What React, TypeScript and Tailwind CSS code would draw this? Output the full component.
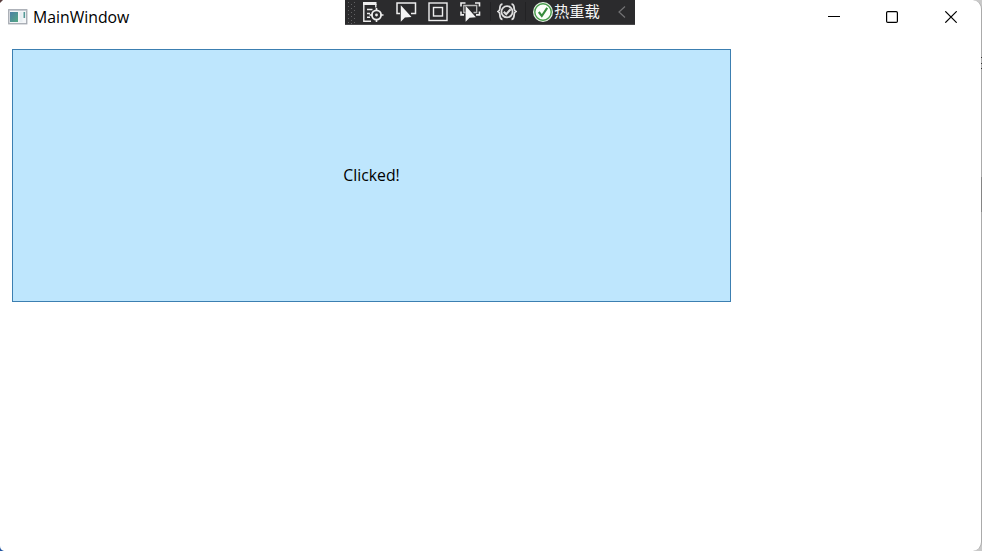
import React from "react";

function AppIcon() {
  return (
    <svg width="20" height="16" viewBox="0 0 20 16" className="shrink-0">
      <defs>
        <linearGradient id="pane" x1="0" y1="0" x2="1" y2="1">
          <stop offset="0" stopColor="#4b7fa6" />
          <stop offset="1" stopColor="#55a884" />
        </linearGradient>
      </defs>
      <rect x="0.75" y="0.75" width="18" height="14" fill="#f4f6f8" stroke="#a4a8b0" strokeWidth="1.3" />
      <path d="M1 1.4h17.5" stroke="#c3c7d0" />
      <rect x="2" y="3" width="8" height="10" fill="url(#pane)" />
      <rect x="11.5" y="3" width="3" height="10" fill="#e8eef2" />
      <path d="M16.3 3v6" stroke="#559a98" strokeWidth="1.6" />
    </svg>
  );
}

function LiveTreeIcon() {
  return (
    <svg width="21" height="22" viewBox="0 0 21 22" fill="none" stroke="#eeeeee" className="shrink-0">
      <path d="M0 1.5h13.5" strokeWidth="3" />
      <path d="M.8 1v18.2H8M12.8 2v3.5M4 7.5h5.5M4 11.5h3M4 15.2h3" strokeWidth="1.4" />
      <circle cx="13.5" cy="13" r="4.6" strokeWidth="1.8" />
      <circle cx="13.5" cy="13" r="1.4" fill="#eeeeee" stroke="none" />
      <path d="M13.5 6v3M13.5 17v3M6.5 13h3M17.5 13h3" strokeWidth="1.6" />
    </svg>
  );
}

function SelectIcon() {
  return (
    <svg width="21" height="22" viewBox="0 0 21 22" fill="none" className="shrink-0">
      <path d="M4 11.5H1V1h18.5v10.5H15" stroke="#eeeeee" strokeWidth="1.5" />
      <path d="M4.8 3.2v16.5l4.1-4.1 6.6-.5z" fill="#f5f5f5" />
    </svg>
  );
}

function AdornerIcon() {
  return (
    <svg width="20" height="20" viewBox="0 0 20 20" fill="none" stroke="#eeeeee" strokeWidth="1.4" className="shrink-0">
      <rect x="1" y="1" width="18" height="17.5" />
      <rect x="5.5" y="5.5" width="9" height="8.5" />
    </svg>
  );
}

function FocusIcon() {
  return (
    <svg width="21" height="22" viewBox="0 0 21 22" fill="none" className="shrink-0">
      <path d="M1 4.5V1h4.5M15 1h4.5v3.5M1 9.5v3.4h3M19.5 9.5v3.4H16" stroke="#eeeeee" strokeWidth="1.6" />
      <path d="M5.5 10.5H3.8V3.5h12.9v7H13.5" stroke="#b9b9b9" strokeWidth="1.3" />
      <path d="M5.6 3.8v16l4-4.1 6.3-.4z" fill="#f5f5f5" />
    </svg>
  );
}

function BindingIcon() {
  return (
    <svg width="20" height="18" viewBox="0 0 20 18" fill="none" stroke="#dedede" className="shrink-0">
      <path d="M5.5 1.2C2.8 1.2 3 3.3 2.8 6 2.7 7.8 1 8.5 1 8.5s1.7.7 1.8 2.5c.2 2.7 0 5.3 2.7 5.3M14.5 1.2c2.7 0 2.5 2.1 2.7 4.8.1 1.8 1.8 2.5 1.8 2.5s-1.7.7-1.8 2.5c-.2 2.7 0 5.3-2.7 5.3" strokeWidth="1.8" />
      <circle cx="10" cy="8.8" r="5.6" strokeWidth="1.8" />
      <path d="M6.8 8.8l2.4 2.5 4.4-5" strokeWidth="2.1" />
    </svg>
  );
}

function ReloadIcon() {
  return (
    <svg width="20" height="20" viewBox="0 0 20 20" fill="none" className="shrink-0">
      <circle cx="10" cy="10" r="10" fill="#e7f3e5" />
      <circle cx="10" cy="10" r="8.2" fill="#fbfffa" stroke="#479b4b" strokeWidth="1.4" />
      <path d="M5.8 10l3 4L14.2 5.8" stroke="#368b3b" strokeWidth="2.1" />
    </svg>
  );
}

function DebugToolbar() {
  return (
    <div className="absolute left-[345px] top-0 flex h-[25px] w-[290px] items-start border-b border-[#49494b] bg-[#2b2b2d] pt-[2px]">
      <svg width="9" height="22" viewBox="0 0 9 22" className="ml-[2px] shrink-0" fill="#626264">
        {[0, 4, 8, 12, 16, 20].map((y) => (
          <g key={y}>
            <rect x="1" y={y} width="1" height="1" />
            <rect x="7" y={y} width="1" height="1" />
            <rect x="4" y={y + 2 > 21 ? 21 : y + 2} width="1" height="1" />
          </g>
        ))}
      </svg>
      <div className="ml-[7px] flex"><LiveTreeIcon /></div>
      <div className="ml-[12px] flex"><SelectIcon /></div>
      <div className="ml-[11px] flex"><AdornerIcon /></div>
      <div className="ml-[12px] flex"><FocusIcon /></div>
      <div className="ml-[9px] h-[19px] w-px bg-[#222224]" />
      <div className="ml-[6px] mt-[1px] flex"><BindingIcon /></div>
      <div className="ml-[8px] h-[19px] w-px bg-[#222224]" />
      <div className="ml-[7px] flex"><ReloadIcon /></div>
      <span className="ml-[1px] mt-[-2px] whitespace-nowrap font-['Noto_Sans_CJK_SC',sans-serif] text-[15.3px] leading-[20px] text-[#f5f5f5]">热重载</span>
      <svg width="8" height="12" viewBox="0 0 8 12" fill="none" stroke="#737375" strokeWidth="1.2" className="ml-[18px] mt-[4px] shrink-0">
        <path d="M7 .5L1 6l6 5.5" />
      </svg>
    </div>
  );
}

function TitleBar() {
  return (
    <header className="flex h-[34px] items-center pl-[8px]">
      <AppIcon />
      <h1 className="ml-[5px] flex-1 whitespace-nowrap font-['Open_Sans','Noto_Sans',sans-serif] text-[15.8px] leading-[20px] text-black">MainWindow</h1>
      <div className="flex items-center gap-[46px] pr-[24px] text-black">
        <svg width="12" height="12" viewBox="0 0 12 12"><path d="M0 5.5h12" stroke="currentColor" /></svg>
        <svg width="12" height="12" viewBox="0 0 12 12" fill="none"><rect x=".6" y=".6" width="10.8" height="10.8" rx="1.2" stroke="currentColor" strokeWidth="1.2" /></svg>
        <svg width="13" height="12" viewBox="0 0 13 12"><path d="M1.3.3l11.4 11.4M12.7.3L1.3 11.7" stroke="currentColor" strokeWidth="1.2" /></svg>
      </div>
    </header>
  );
}

export default function App() {
  return (
    <div className="relative h-[551px] w-[982px] overflow-hidden bg-[#c9c9c9]">
      <div className="h-full w-[982px] rounded-r-[9px] border-r border-[#ababab] bg-white">
        <TitleBar />
        <main className="pl-[12px] pt-[15px]">
          <button className="flex h-[253px] w-[719px] items-center justify-center border border-[#3c7fb1] bg-[#bee6fd] font-['Open_Sans','Noto_Sans',sans-serif] text-[15.8px] text-black">
            Clicked!
          </button>
        </main>
      </div>
      <DebugToolbar />
      <svg width="4" height="4" viewBox="0 0 4 4" className="absolute left-0 top-0"><path d="M0 0h3L0 3z" fill="#5b3e3e" /></svg>
      <svg width="4" height="5" viewBox="0 0 4 5" className="absolute bottom-0 left-0"><path d="M0 0q0 4 4 5H0z" fill="#2456a0" /></svg>
      <div className="absolute right-0 top-[57px] flex h-[12px] w-px flex-col justify-between">
        <i className="h-px bg-[#333]" />
        <i className="h-px bg-[#333]" />
        <i className="h-px bg-[#333]" />
      </div>
      <div className="absolute right-0 top-[177px] h-[35px] w-px bg-[#858585]" />
    </div>
  );
}
